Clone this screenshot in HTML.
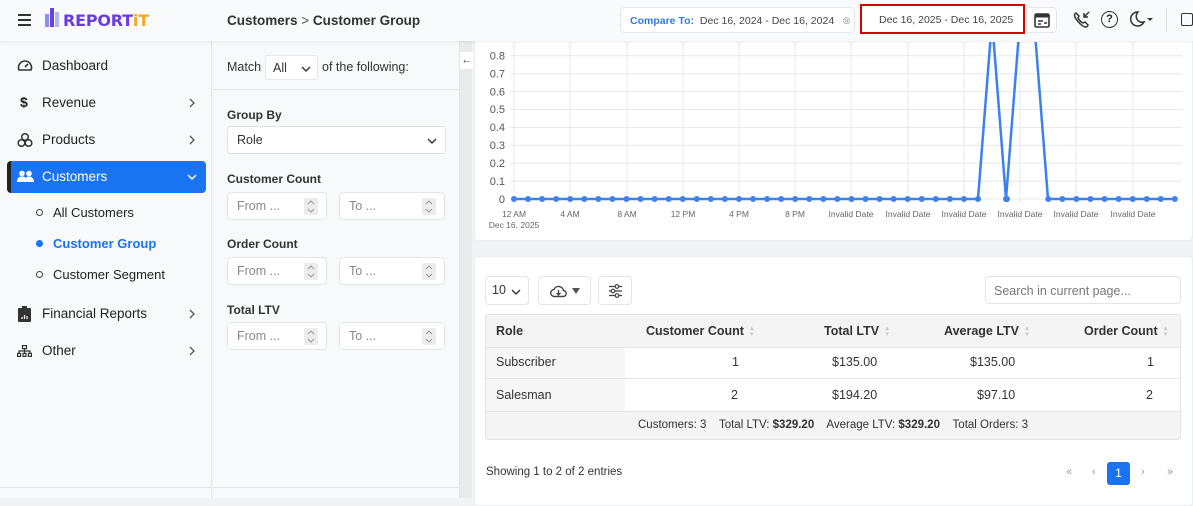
<!DOCTYPE html>
<html><head><meta charset="utf-8"><style>
*{box-sizing:border-box;margin:0;padding:0}
body{width:1193px;height:498px;overflow:hidden;background:#f2f3f5;font-family:"Liberation Sans",sans-serif;color:#222;position:relative}
.a{position:absolute}
.hdr{left:0;top:0;width:1193px;height:41px;background:#f9fafb;box-shadow:0 1px 3px rgba(0,0,0,.08);z-index:5}
.side{left:0;top:41px;width:212px;height:457px;background:#f8f9fb;border-right:1px solid #e6e7ea}
.nav{position:absolute;left:42px;font-size:13.5px;color:#222;white-space:nowrap}
.ic{position:absolute;left:17px}
.chev{position:absolute;left:187px}
.filt{left:213px;top:41px;width:247px;height:457px;background:#f8f9fb;border-right:1px solid #e4e5e8}
.lbl{position:absolute;left:14px;font-size:12px;font-weight:bold;color:#333}
.inp{position:absolute;height:28px;background:#fff;border:1px solid #e3e4e7;border-radius:4px;font-size:12.5px;color:#888;padding:6px 9px}
.spin{position:absolute;right:8px;top:5px;width:14px;height:17px;background:#ececec;border-radius:2px}
.card{background:#fff;border:1px solid #eceef0;border-radius:4px}
.btn{position:absolute;top:276px;height:29px;border:1px solid #e3e4e7;border-radius:4px;background:#fff;font-size:12.5px;color:#333}
.th{position:absolute;font-size:12.5px;font-weight:bold;color:#333;white-space:nowrap}
.td{position:absolute;font-size:12.5px;color:#333}
.srt{display:inline-block;font-size:6px;line-height:6px;color:#c8c8c8;vertical-align:middle;margin-left:5px}
</style></head><body>
<svg width="0" height="0" style="position:absolute"><defs>
<symbol id="chr" viewBox="0 0 10 10"><path d="M3 1l4 4-4 4" fill="none" stroke="#555" stroke-width="1.3"/></symbol>
<symbol id="chd" viewBox="0 0 10 10"><path d="M1 3l4 4 4-4" fill="none" stroke="currentColor" stroke-width="1.4"/></symbol>
<symbol id="spn" viewBox="0 0 14 17"><path d="M4 6l3-3 3 3M4 11l3 3 3-3" fill="none" stroke="#999" stroke-width="1"/></symbol>
</defs></svg>

<div class="a hdr">
  <div class="a" style="left:18px;top:14px;width:13px;height:2px;background:#333;box-shadow:0 5px 0 #333,0 10px 0 #333"></div>
  <div class="a" style="left:45px;top:14px;width:4px;height:13px;background:#8a8ff2"></div>
  <div class="a" style="left:50px;top:8px;width:4px;height:19px;background:#6b3fe0"></div>
  <div class="a" style="left:55px;top:12px;width:4px;height:15px;background:#b0b5f5"></div>
  <div class="a" style="left:63px;top:11px;font-size:16px;font-weight:900;color:#6a3be0;letter-spacing:-.2px;font-family:'DejaVu Sans',sans-serif">REPORT<span style="color:#f5a623">iT</span></div>
  <div class="a" style="left:227px;top:13px;font-size:13.5px;font-weight:bold;color:#333">Customers <span style="font-weight:normal;color:#555">&gt;</span> Customer Group</div>
  <div class="a" style="left:620px;top:7px;width:235px;height:26px;background:#fff;border:1px solid #e6e7ea;border-radius:5px;font-size:10.5px;padding:7px 9px;white-space:nowrap"><span style="color:#2f7ae5;font-weight:bold">Compare To:</span> <span style="color:#444;margin-left:3px">Dec 16, 2024 - Dec 16, 2024</span> <span style="color:#aaa;margin-left:5px">⊗</span></div>
  <div class="a" style="left:860px;top:4px;width:165px;height:30px;border:2px solid #d50000;background:#fff;font-size:10.5px;color:#444;padding:8px 0 0 17px">Dec 16, 2025 - Dec 16, 2025</div>
  <div class="a" style="left:1026px;top:7px;width:31px;height:26px;background:#fff;border:1px solid #e6e7ea;border-radius:4px">
    <svg class="a" style="left:7px;top:5px" width="16" height="15" viewBox="0 0 16 15"><rect x="1" y="1" width="14" height="13" rx="1.5" fill="none" stroke="#333" stroke-width="1.6"/><rect x="1" y="1" width="14" height="3.5" fill="#333"/><path d="M4 8h5M4 11h3M10 10h3" stroke="#333" stroke-width="1.5"/></svg></div>
  <svg class="a" style="left:1073px;top:11px" width="18" height="17" viewBox="0 0 18 17"><path d="M3 2c-2 1-2 3 0 6s6 7 9 8c2 0 3-1 3-2l-3-3-2 1c-2-1-4-3-5-5l1-2-3-3z" fill="none" stroke="#333" stroke-width="1.5"/><path d="M11 6l5-5M11 2v4h4" fill="none" stroke="#333" stroke-width="1.5"/></svg>
  <div class="a" style="left:1101px;top:11px;width:17px;height:17px;border:1.6px solid #333;border-radius:50%;font-size:11px;font-weight:bold;text-align:center;line-height:14px">?</div>
  <svg class="a" style="left:1128px;top:10px" width="26" height="18" viewBox="0 0 26 18"><path d="M10 2a7 7 0 1 0 6 10a6 6 0 0 1-6-10z" fill="none" stroke="#333" stroke-width="1.5"/><path d="M19 8h6l-3 3z" fill="#333"/></svg>
  <div class="a" style="left:1166px;top:8px;width:1px;height:24px;background:#ddd"></div>
  <div class="a" style="left:1181px;top:13px;width:12px;height:13px;border:1.6px solid #333;border-radius:2px"></div>
</div>

<div class="a side">
  <svg class="ic" style="top:18px" width="16" height="13" viewBox="0 0 16 13"><path d="M2 11a6.5 6.5 0 1 1 12 0z" fill="none" stroke="#333" stroke-width="1.6"/><path d="M8 8l3-3" stroke="#333" stroke-width="1.6"/></svg>
  <div class="nav" style="top:17px">Dashboard</div>
  <div class="ic" style="top:53px;left:20px;font-size:14px;font-weight:bold">$</div>
  <div class="nav" style="top:54px">Revenue</div><svg class="chev" style="top:57px" width="10" height="10"><use href="#chr"/></svg>
  <svg class="ic" style="top:91px" width="16" height="16" viewBox="0 0 16 16"><g fill="none" stroke="#333" stroke-width="1.5"><circle cx="8" cy="5" r="3.3"/><circle cx="4.5" cy="11" r="3.3"/><circle cx="11.5" cy="11" r="3.3"/></g></svg>
  <div class="nav" style="top:91px">Products</div><svg class="chev" style="top:94px" width="10" height="10"><use href="#chr"/></svg>
  <div class="a" style="left:7px;top:120px;width:199px;height:32px;background:#1a73f0;border-radius:4px;border-left:4px solid #222"></div>
  <svg class="ic" style="top:129px" width="17" height="13" viewBox="0 0 17 13"><g fill="#fff"><circle cx="5" cy="3.5" r="2.8"/><circle cx="12" cy="3.5" r="2.8"/><path d="M0 12c0-4 2-5.5 5-5.5s5 1.5 5 5.5zM8 12c0-4 1.5-5.5 4-5.5s5 1.5 5 5.5z"/></g></svg>
  <div class="nav" style="top:128px;color:#fff">Customers</div><svg class="chev" style="top:131px;color:#fff" width="10" height="10"><use href="#chd"/></svg>
  <div class="a" style="left:36px;top:168px;width:7px;height:7px;border:1.5px solid #444;border-radius:50%"></div><div class="a" style="left:53px;top:164px;font-size:13px">All Customers</div>
  <div class="a" style="left:36px;top:199px;width:7px;height:7px;background:#1a73f0;border-radius:50%"></div><div class="a" style="left:53px;top:195px;font-size:13px;color:#1a73f0;font-weight:bold">Customer Group</div>
  <div class="a" style="left:36px;top:230px;width:7px;height:7px;border:1.5px solid #444;border-radius:50%"></div><div class="a" style="left:53px;top:226px;font-size:13px">Customer Segment</div>
  <svg class="ic" style="top:265px;left:18px" width="13" height="16" viewBox="0 0 13 16"><rect x="0" y="2" width="13" height="14" rx="1" fill="#333"/><rect x="4" y="0" width="5" height="3" fill="#333"/><path d="M4 13v-2M6.5 13v-4M9 13v-3" stroke="#fff" stroke-width="1.2"/></svg>
  <div class="nav" style="top:265px">Financial Reports</div><svg class="chev" style="top:268px" width="10" height="10"><use href="#chr"/></svg>
  <svg class="ic" style="top:304px" width="15" height="12" viewBox="0 0 15 12"><g fill="none" stroke="#333" stroke-width="1.2"><rect x="5.5" y="0.6" width="4" height="3"/><path d="M7.5 3.6v2.4M2 8V6h11v2M7.5 6v2"/><rect x="0.6" y="8.4" width="3" height="3"/><rect x="6" y="8.4" width="3" height="3"/><rect x="11.4" y="8.4" width="3" height="3"/></g></svg>
  <div class="nav" style="top:302px">Other</div><svg class="chev" style="top:305px" width="10" height="10"><use href="#chr"/></svg>
  <div class="a" style="left:0;top:446px;width:212px;height:1px;background:#e4e5e8"></div>
</div>

<div class="a filt">
  <div class="a" style="left:14px;top:19px;font-size:12.5px;color:#333">Match</div>
  <div class="a" style="left:52px;top:14px;width:53px;height:25px;background:#fff;border:1px solid #e6e7ea;border-radius:3px;font-size:12.5px;padding:5px 7px;color:#333">All <svg class="a" style="right:6px;top:8px;color:#333" width="10" height="10"><use href="#chd"/></svg></div>
  <div class="a" style="left:109px;top:19px;font-size:12.5px;color:#333">of the following:</div>
  <div class="a" style="left:0;top:48px;width:246px;height:1px;background:#e4e5e8"></div>
  <div class="lbl" style="top:67px">Group By</div>
  <div class="inp" style="left:14px;top:85px;width:219px;color:#333">Role<svg class="a" style="right:8px;top:9px;color:#333" width="10" height="10"><use href="#chd"/></svg></div>
  <div class="lbl" style="top:131px">Customer Count</div>
  <div class="inp" style="left:14px;top:151px;width:100px">From ...<svg class="spin"><use href="#spn"/></svg></div>
  <div class="inp" style="left:126px;top:151px;width:106px">To ...<svg class="spin"><use href="#spn"/></svg></div>
  <div class="lbl" style="top:196px">Order Count</div>
  <div class="inp" style="left:14px;top:216px;width:100px">From ...<svg class="spin"><use href="#spn"/></svg></div>
  <div class="inp" style="left:126px;top:216px;width:106px">To ...<svg class="spin"><use href="#spn"/></svg></div>
  <div class="lbl" style="top:262px">Total LTV</div>
  <div class="inp" style="left:14px;top:281px;width:100px">From ...<svg class="spin"><use href="#spn"/></svg></div>
  <div class="inp" style="left:126px;top:281px;width:106px">To ...<svg class="spin"><use href="#spn"/></svg></div>
  <div class="a" style="left:0;top:446px;width:246px;height:1px;background:#e4e5e8"></div>
</div>
<div class="a" style="left:460px;top:41px;width:12px;height:457px;background:#e9eaec"></div>
<div class="a" style="left:460px;top:52px;width:13px;height:17px;background:#fff;font-size:10px;text-align:center;line-height:17px">←</div>

<div class="a card" style="left:474px;top:30px;width:719px;height:211px"></div>
<svg class="a" style="left:0;top:0;z-index:3" width="1193" height="245">
<defs><clipPath id="c"><rect x="474" y="42" width="719" height="200"/></clipPath></defs>
<g stroke="#e8e8e8" stroke-width="1">
<line x1="510" y1="55.8" x2="1182" y2="55.8"/><line x1="510" y1="73.7" x2="1182" y2="73.7"/><line x1="510" y1="91.6" x2="1182" y2="91.6"/><line x1="510" y1="109.5" x2="1182" y2="109.5"/><line x1="510" y1="127.4" x2="1182" y2="127.4"/><line x1="510" y1="145.3" x2="1182" y2="145.3"/><line x1="510" y1="163.2" x2="1182" y2="163.2"/><line x1="510" y1="181.1" x2="1182" y2="181.1"/><line x1="510" y1="199" x2="1182" y2="199"/>
<g clip-path="url(#c)">
<line x1="514" y1="42" x2="514" y2="203"/><line x1="570" y1="42" x2="570" y2="203"/><line x1="627" y1="42" x2="627" y2="203"/><line x1="683" y1="42" x2="683" y2="203"/><line x1="739" y1="42" x2="739" y2="203"/><line x1="795" y1="42" x2="795" y2="203"/><line x1="851" y1="42" x2="851" y2="203"/><line x1="908" y1="42" x2="908" y2="203"/><line x1="964" y1="42" x2="964" y2="203"/><line x1="1020" y1="42" x2="1020" y2="203"/><line x1="1076" y1="42" x2="1076" y2="203"/><line x1="1133" y1="42" x2="1133" y2="203"/></g></g>
<g font-family="Liberation Sans" font-size="11" fill="#555" text-anchor="end">
<text x="505" y="59.5">0.8</text><text x="505" y="77.5">0.7</text><text x="505" y="95.5">0.6</text><text x="505" y="113">0.5</text><text x="505" y="131">0.4</text><text x="505" y="149">0.3</text><text x="505" y="167">0.2</text><text x="505" y="185">0.1</text><text x="505" y="203">0</text></g>
<g clip-path="url(#c)" stroke="#3b82f0" fill="none">
<polyline stroke-width="2.5" points="514,199 978,199 992,20 1006,199 1020,20 1034,20 1048,199 1175,199"/>
<line x1="514" y1="199" x2="978.1" y2="199" stroke-width="6" stroke-linecap="round" stroke-dasharray="0 14.06"/>
<line x1="1006" y1="199" x2="1007" y2="199" stroke-width="6" stroke-linecap="round"/>
<line x1="1048.3" y1="199" x2="1175" y2="199" stroke-width="6" stroke-linecap="round" stroke-dasharray="0 14.06"/>
</g>
<g font-family="Liberation Sans" font-size="8.5" fill="#666" text-anchor="middle">
<text x="514" y="217">12 AM</text><text x="570" y="217">4 AM</text><text x="627" y="217">8 AM</text><text x="683" y="217">12 PM</text><text x="739" y="217">4 PM</text><text x="795" y="217">8 PM</text>
<text x="851" y="217">Invalid Date</text><text x="908" y="217">Invalid Date</text><text x="964" y="217">Invalid Date</text><text x="1020" y="217">Invalid Date</text><text x="1076" y="217">Invalid Date</text><text x="1133" y="217">Invalid Date</text>
<text x="514" y="228">Dec 16, 2025</text></g>
</svg>

<div class="a card" style="left:474px;top:256px;width:719px;height:250px"></div>
<div class="btn" style="left:485px;width:44px;padding:6px 6px">10 <svg class="a" style="right:7px;top:10px;color:#333" width="10" height="10"><use href="#chd"/></svg></div>
<div class="btn" style="left:538px;width:53px">
  <svg class="a" style="left:11px;top:7px" width="17" height="14" viewBox="0 0 17 14"><path d="M4.5 12.5a3.5 3.5 0 0 1-.5-7a5 5 0 0 1 9.5 1a3 3 0 0 1-.5 6z" fill="none" stroke="#444" stroke-width="1.4"/><path d="M8.5 6v5M6.5 9l2 2 2-2" fill="none" stroke="#444" stroke-width="1.3"/></svg>
  <svg class="a" style="left:33px;top:11px" width="8" height="7"><path d="M0 0h8l-4 6z" fill="#555"/></svg></div>
<div class="btn" style="left:598px;width:34px">
  <svg class="a" style="left:9px;top:7px" width="15" height="14" viewBox="0 0 15 14"><g fill="none" stroke="#444" stroke-width="1.2"><path d="M1 2.5h13M1 7h13M1 11.5h13"/><circle cx="9" cy="2.5" r="1.8" fill="#fff"/><circle cx="5" cy="7" r="1.8" fill="#fff"/><circle cx="9" cy="11.5" r="1.8" fill="#fff"/></g></svg></div>
<div class="a" style="left:985px;top:276px;width:196px;height:28px;background:#fff;border:1px solid #e3e4e7;border-radius:4px;font-size:12.5px;color:#777;padding:7px 8px">Search in current page...</div>

<div class="a" style="left:485px;top:314px;width:696px;height:126px;border:1px solid #e3e4e7;border-radius:3px;background:#f4f4f5"></div>
<div class="a" style="left:486px;top:347px;width:694px;height:64px;background:#fff"></div>
<div class="a" style="left:486px;top:347px;width:139px;height:64px;background:#f6f6f7"></div>
<div class="a" style="left:486px;top:347px;width:694px;height:1px;background:#e6e6e8"></div>
<div class="a" style="left:486px;top:378px;width:694px;height:1px;background:#e6e6e8"></div>
<div class="a" style="left:486px;top:411px;width:694px;height:1px;background:#e3e3e5"></div>
<div class="th" style="left:496px;top:324px">Role</div>
<div class="th" style="left:646px;top:324px">Customer Count<span class="srt">▲<br>▼</span></div>
<div class="th" style="left:824px;top:324px">Total LTV<span class="srt">▲<br>▼</span></div>
<div class="th" style="left:944px;top:324px">Average LTV<span class="srt">▲<br>▼</span></div>
<div class="th" style="left:1084px;top:324px">Order Count<span class="srt">▲<br>▼</span></div>
<div class="td" style="left:496px;top:355px">Subscriber</div>
<div class="td" style="left:732px;top:355px">1</div>
<div class="td" style="left:832px;top:355px">$135.00</div>
<div class="td" style="left:970px;top:355px">$135.00</div>
<div class="td" style="left:1147px;top:355px">1</div>
<div class="td" style="left:496px;top:388px">Salesman</div>
<div class="td" style="left:731px;top:388px">2</div>
<div class="td" style="left:832px;top:388px">$194.20</div>
<div class="td" style="left:977px;top:388px">$97.10</div>
<div class="td" style="left:1146px;top:388px">2</div>
<div class="td" style="left:638px;top:419px;font-size:11.5px;white-space:nowrap">Customers: 3 &nbsp;&nbsp; Total LTV: <b>$329.20</b> &nbsp;&nbsp; Average LTV: <b>$329.20</b> &nbsp;&nbsp; Total Orders: 3</div>

<div class="a" style="left:486px;top:466px;font-size:11.5px;color:#333">Showing 1 to 2 of 2 entries</div>
<div class="a" style="left:1066px;top:466px;font-size:11px;color:#999">«</div>
<div class="a" style="left:1092px;top:466px;font-size:11px;color:#999">‹</div>
<div class="a" style="left:1107px;top:462px;width:23px;height:23px;background:#1a73f0;border-radius:3px;color:#fff;font-size:12px;text-align:center;line-height:23px">1</div>
<div class="a" style="left:1141px;top:466px;font-size:11px;color:#999">›</div>
<div class="a" style="left:1167px;top:466px;font-size:11px;color:#999">»</div>
</body></html>
